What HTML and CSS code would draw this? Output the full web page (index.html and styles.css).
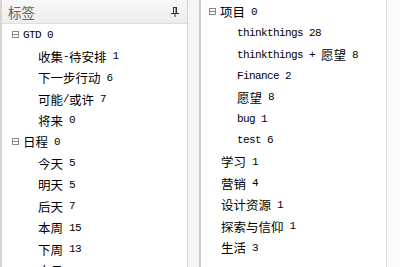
FILE: index.html
```html
<!DOCTYPE html>
<html>
<head>
<meta charset="utf-8">
<link rel="stylesheet" href="styles.css">
</head>
<body>
<div class="frame">
  <div class="panel left">
    <div class="header">
      <span class="title">标签</span>
      <svg class="pin" width="8" height="10" viewBox="0 0 8 10">
        <path d="M2 0.5H6M2.5 0.5V6M5.5 0.5V6M0 6.5H8M4 6.5V10" stroke="#333" stroke-width="1" fill="none"/>
        <path d="M5 1V6" stroke="#333" stroke-width="1"/>
      </svg>
    </div>
    <div class="tree">
      <div class="row l0"><span class="exp"></span><span class="en">GTD 0</span></div>
      <div class="row l1">收集<span class="en">-</span>待安排<span class="en"> 1</span></div>
      <div class="row l1">下一步行动<span class="en"> 6</span></div>
      <div class="row l1">可能<span class="en">/</span>或许<span class="en"> 7</span></div>
      <div class="row l1">将来<span class="en"> 0</span></div>
      <div class="row l0"><span class="exp"></span>日程<span class="en"> 0</span></div>
      <div class="row l1">今天<span class="en"> 5</span></div>
      <div class="row l1">明天<span class="en"> 5</span></div>
      <div class="row l1">后天<span class="en"> 7</span></div>
      <div class="row l1">本周<span class="en"> 15</span></div>
      <div class="row l1">下周<span class="en"> 13</span></div>
      <div class="row l1">本月<span class="en"> 15</span></div>
    </div>
  </div>
  <div class="gap"></div>
  <div class="panel right">
    <div class="tree rtree">
      <div class="row r0"><span class="exp"></span>项目<span class="en"> 0</span></div>
      <div class="row r1"><span class="en">thinkthings 28</span></div>
      <div class="row r1"><span class="en">thinkthings + </span>愿望<span class="en"> 8</span></div>
      <div class="row r1"><span class="en">Finance 2</span></div>
      <div class="row r1">愿望<span class="en"> 8</span></div>
      <div class="row r1"><span class="en">bug 1</span></div>
      <div class="row r1"><span class="en">test 6</span></div>
      <div class="row rleaf">学习<span class="en"> 1</span></div>
      <div class="row rleaf">营销<span class="en"> 4</span></div>
      <div class="row rleaf">设计资源<span class="en"> 1</span></div>
      <div class="row rleaf">探索与信仰<span class="en"> 1</span></div>
      <div class="row rleaf">生活<span class="en"> 3</span></div>
    </div>
  </div>
  <div class="rest"></div>
</div>
</body>
</html>
```

FILE: styles.css
```css
html, body {
  margin: 0;
  padding: 0;
  width: 400px;
  height: 267px;
  overflow: hidden;
  background: #f7f7f7;
}
.frame {
  display: flex;
  height: 267px;
}
.panel {
  background: #ffffff;
  height: 267px;
  overflow: hidden;
}
.left {
  width: 185px;
  border-left: 2px solid #d8d5cf;
  border-right: 1px solid #d4d4d4;
}
.gap {
  width: 11px;
  background: #f5f5f5;
}
.right {
  width: 185px;
  border-left: 2px solid #cfcbc3;
  border-right: 1px solid #dcdcdc;
}
.rest {
  flex: 1;
  background: #fbfbfb;
}
.header {
  height: 23px;
  border-bottom: 1px solid #dedede;
  background: linear-gradient(#f8f8f8, #ececec);
  display: flex;
  align-items: center;
  justify-content: space-between;
  padding: 0 8px 0 6px;
}
.title {
  font-family: "Noto Sans CJK SC", sans-serif;
  font-size: 13.5px;
  color: #666;
}
.pin {
  display: block;
}
.tree {
  font-family: "Noto Sans CJK SC", sans-serif;
  font-size: 12.5px;
  color: #000;
}
.rtree {
  padding-top: 1px;
}
.row {
  height: 21.45px;
  display: flex;
  align-items: center;
  white-space: pre;
}
.en {
  font-family: "Liberation Mono", monospace;
  font-size: 11px;
  letter-spacing: -0.6px;
  white-space: pre;
}
.exp {
  width: 5px;
  height: 5px;
  border: 1px solid #8a8a8a;
  position: relative;
  margin-right: 4px;
  flex: none;
}
.exp::after {
  content: "";
  position: absolute;
  left: 0;
  right: 0;
  top: 2px;
  height: 1px;
  background: #8a8a8a;
}
.l0 { padding-left: 10px; }
.l1 { padding-left: 36px; }
.r0 { padding-left: 8px; }
.r1 { padding-left: 36px; }
.rleaf { padding-left: 20px; }
```
